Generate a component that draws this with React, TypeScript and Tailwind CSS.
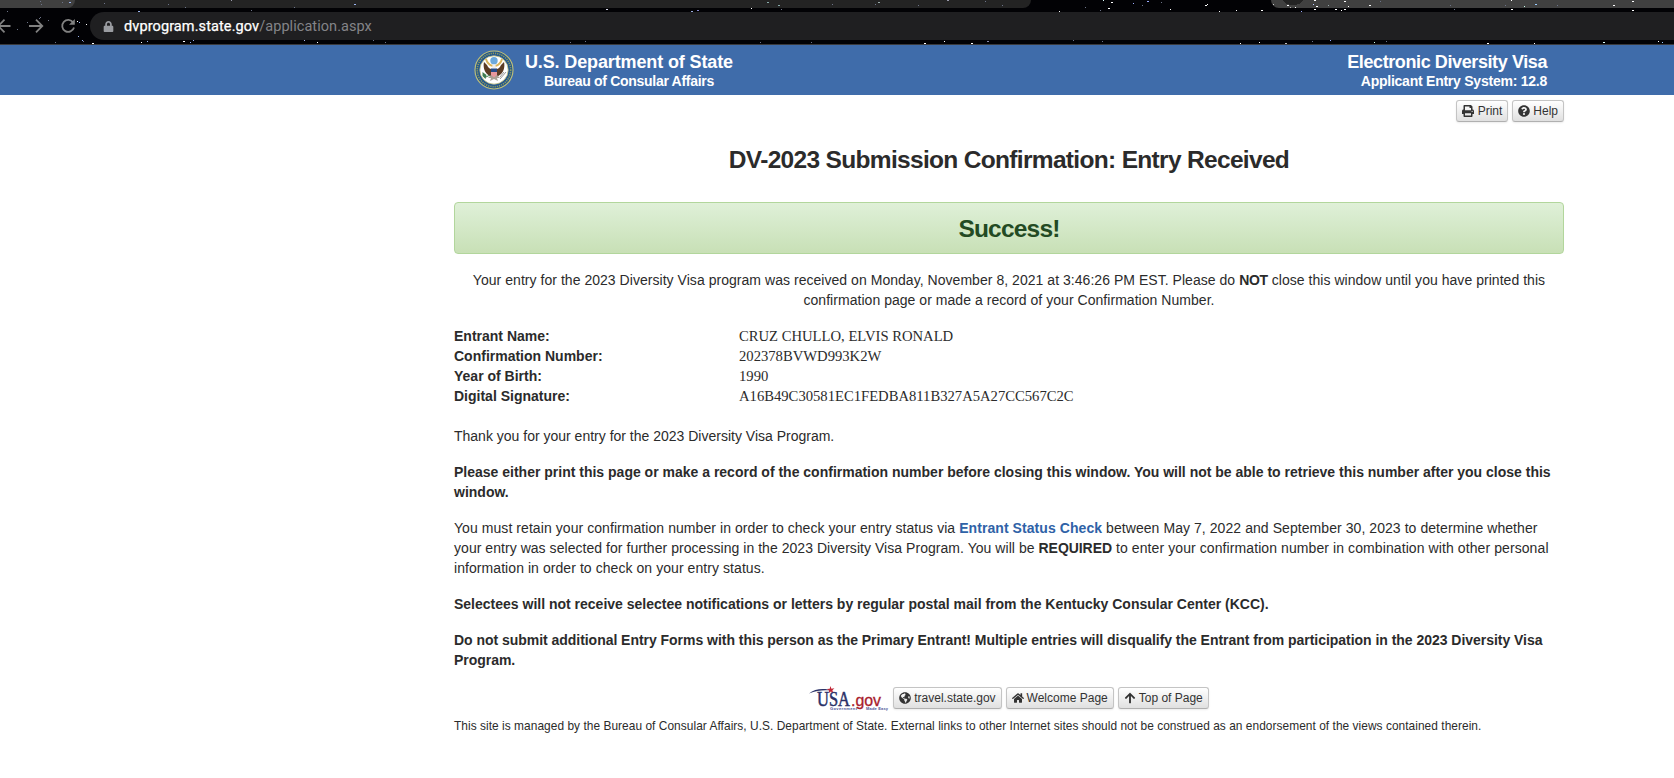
import React from 'react';
import { FaPrint, FaQuestionCircle, FaHome, FaArrowUp, FaGlobeAmericas, FaLock } from 'react-icons/fa';

type S = [number, number, string?, number?];
const stars: S[] = [
  [40, 1], [41, 4], [62, 2], [7, 11], [40, 17], [39, 18], [27, 22], [17, 29], [48, 20], [69, 2, '#9ab4f0', 2], [77, 21, '#fff'], [79, 22, '#9ab4f0'], [86, 24, '#fff'], [104, 3], [116, 12], [138, 11, '#9ab4f0', 2],
  [78, 36, '#9ab4f0'], [82, 40, '#9ab4f0'], [83, 41], [92, 43, '#fff', 2], [55, 42], [141, 42, '#fff'], [147, 41, '#9ab4f0'], [183, 41, '#fff', 2], [190, 42, '#9ab4f0'], [193, 40, '#9ab4f0'], [304, 40, '#aab8f0'], [317, 42, '#fff'],
  [373, 40], [385, 42], [294, 7], [354, 4, '#9ab4f0', 2], [231, 0, '#99a'], [168, 4], [185, 7], [251, 10],
  [606, 9, '#dde', 2], [691, 11, '#9ad', 2], [697, 10, '#88c', 2], [767, 2, '#8aa', 2], [778, 5, '#8aa', 2], [751, 8, '#fff'], [781, 9], [832, 4], [878, 2, '#9aa', 2], [875, 4], [918, 5], [947, 0, '#99a', 2], [985, 1], [1002, 5],
  [924, 43, '#fff', 2], [944, 41, '#fff'], [971, 43, '#fff', 2], [987, 41, '#88a', 2], [1073, 40], [1102, 41], [570, 42], [585, 41], [760, 42], [811, 42], [1059, 11, '#fff'],
  [1103, 0, '#dff'], [1111, 2, '#fff', 2], [1108, 8, '#fff', 2], [1100, 10], [1085, 7], [1133, 3, '#9af'], [1142, 5], [1147, 1, '#9af', 2], [1161, 2], [1170, 9, '#fff'], [1205, 5, '#fff', 2], [1207, 4, '#fff'], [1219, 11, '#fff'], [1261, 10, '#fff', 2],
  [1236, 10, '#fff'], [1273, 4, '#ccc'], [1287, 5, '#fff', 2], [1290, 7, '#aaa'], [1295, 7, '#fff'], [1301, 11, '#9af'], [1314, 0, '#fff', 2], [1313, 4, '#bcf'], [1316, 6, '#fff', 2], [1314, 9, '#fff', 2], [1328, 5, '#9aa'], [1335, 9, '#fff', 2], [1341, 10, '#fff'], [1344, 9, '#fff', 2], [1344, 1, '#fff', 2], [1348, 6, '#fff'],
  [1369, 5, '#fff', 2], [1380, 1], [1454, 9], [1450, 5], [1511, 0, '#fff'], [1511, 9, '#fff', 2], [1505, 5], [1524, 6, '#cfe'], [1535, 4, '#9cf', 2], [1557, 5], [1613, 5, '#fff', 2], [1632, 1, '#fff', 2], [1632, 10, '#fff', 2],
  [1240, 43, '#fff'], [1259, 42, '#fff'], [1285, 43, '#bbb', 2], [1312, 41], [1330, 40, '#9af'], [1374, 42, '#cfe'], [1386, 41], [1487, 43, '#fff', 2], [1534, 43, '#fff'], [1603, 42, '#dff', 2], [1658, 41, '#fff'], [1662, 42, '#9cf'],
];

function Browser() {
  return (
    <div className="relative flex h-[45px] w-full flex-col overflow-hidden border-b border-[#3a3a3c] bg-[#020205]">
      <div className="flex h-2 justify-between">
        <div className="flex h-2 w-[1031px] overflow-hidden rounded-br-lg bg-[#232323]">
          <div className="h-2 w-[75px] rounded-br-lg bg-[#404040]" />
        </div>
        <div className="h-2 w-[403px] rounded-bl-lg bg-[#404040]" />
      </div>
      <svg className="absolute left-0 top-0" width="1674" height="44" shapeRendering="crispEdges">
        <ellipse cx="1293" cy="0" rx="10" ry="5" fill="#232323" />
        {stars.map(([x, y, c = '#6d7488', w = 1], i) => (
          <rect key={i} x={x} y={y} width={w} height="1" fill={c} />
        ))}
      </svg>
      <div className="relative mt-1 flex h-7 items-center">
        <svg className="shrink-0" width="90" height="28" fill="none" stroke="#818181" strokeWidth="1.8">
          <path d="M10.500 14H-3M4.500 7.700l-6.300 6.300 6.300 6.300" />
          <path d="M29 14h13M36 7.700l6.300 6.300-6.300 6.300" />
          <path d="M73.200 10.500A6 6 0 1 0 74 15.500" />
          <path d="M74.800 7v5.800H69z" fill="#818181" stroke="none" />
        </svg>
        <div className="flex h-7 flex-1 items-center rounded-l-full bg-[#1f1f21] pl-[13px] font-['Roboto',sans-serif] text-[14.500px] text-[#848488]">
          <FaLock className="mr-[10px] text-[11px] text-[#9a9ca1]" />
          <span className="pt-[2px] tracking-[0.1px] text-white [-webkit-text-stroke:0.25px_white]">dvprogram.state.gov</span>
          <span className="pt-[2px] tracking-[0.06px]">/application.aspx</span>
        </div>
      </div>
    </div>
  );
}

function Seal() {
  return (
    <svg width="40" height="40" viewBox="0 0 40 40">
      <circle cx="20" cy="20" r="19" fill="#24578c" stroke="#c3c277" strokeWidth="1.100" />
      <circle cx="20" cy="20" r="16.700" fill="none" stroke="#8d9b60" strokeWidth="1.600" strokeDasharray="1.200 1" />
      <circle cx="20" cy="20" r="14.200" fill="#fff" stroke="#b8b877" strokeWidth=".8" />
      <path d="M10 12c-1 4 0 9 3 12l4 3 1-4v-4c-3 0-4-2-5-4zM30 12c1 4 0 9-3 12l-4 3-1-4v-4c3 0 4-2 5-4z" fill="#5b3c24" />
      <path d="M17 25l-3 3 3 0-1 3 4-2 4 2-1-3 3 0-3-3z" fill="#aaa195" />
      <path d="M12 9c1 4 3 6 7 7M28 9c-1 4-3 6-7 7" stroke="#d9b45b" strokeWidth="2" fill="none" />
      <circle cx="20" cy="10.800" r="3.700" fill="#6ca9dc" />
      <path d="M18.500 14.500h3l.5 4h-4z" fill="#eee" />
      <path d="M17 18.500h6v3.500h-6z" fill="#244a87" />
      <path d="M17 22h6v3l-3 2.500-3-2.500z" fill="#e8989d" />
      <path d="M8.500 22l4 3-1 4-3-3z" fill="#3f7d50" />
      <path d="M12 27l4-2" stroke="#3f7d50" />
      <path d="M32 22l-6 7M30 22l-4 5" stroke="#999" />
    </svg>
  );
}

function UsaLogo() {
  return (
    <svg width="80" height="26" viewBox="0 0 80 26">
      <path d="M0 8.500C6 3 16 3 24 5.500 15 4.800 8 5 0 8.500z" fill="#2a3167" />
      <path d="M21.500 1l.9 2.700 3-.4-2 2 .9 2.700-2.400-1.500-2.400 1.700.6-2.700-2.300-1.500 2.900-.2z" fill="#c02636" />
      <text x="8" y="20.500" fontFamily="Liberation Serif" fontSize="20" textLength="33" lengthAdjust="spacingAndGlyphs" fill="#2a3167" stroke="#2a3167" strokeWidth=".5">USA</text>
      <text x="42" y="20.500" fontFamily="Liberation Sans" fontSize="16" textLength="30" lengthAdjust="spacingAndGlyphs" fill="#a8202c" stroke="#a8202c" strokeWidth=".3">.gov</text>
      <text x="21" y="24.800" fontFamily="Liberation Sans" fontWeight="bold" fontSize="4" textLength="27" fill="#4a5296">Government</text>
      <text x="57" y="24.800" fontFamily="Liberation Sans" fontWeight="bold" fontSize="4" textLength="22" fill="#4a5296">Made Easy</text>
    </svg>
  );
}

function Button({ icon, children }: { icon: React.ReactNode; children: React.ReactNode }) {
  return (
    <button className="flex h-[22px] items-center gap-[3px] whitespace-nowrap rounded-[3px] border border-[#c4c4c4] border-b-[#b0b0b0] bg-linear-to-b from-white to-[#e0e0e0] px-[5px] text-[12px] text-[#333] shadow-[0_1px_2px_rgba(0,0,0,0.08)]">
      {icon}
      {children}
    </button>
  );
}

const details = [
  ['Entrant Name:', 'CRUZ CHULLO, ELVIS RONALD'],
  ['Confirmation Number:', '202378BVWD993K2W'],
  ['Year of Birth:', '1990'],
  ['Digital Signature:', 'A16B49C30581EC1FEDBA811B327A5A27CC567C2C'],
];

export default function App() {
  return (
    <div className="h-[778px] w-[1674px] overflow-hidden bg-white font-['Liberation_Sans',Arial,sans-serif] text-[14px] leading-5 text-[#2b2b2b]">
      <Browser />
      <header className="flex h-[50px] justify-between bg-[#3f6caa] pl-[474px] pr-[127px] font-bold text-white">
        <div className="flex items-center gap-[11px]">
          <Seal />
          <div className="pt-[2px] text-center">
            <div className="text-[18px] leading-[20px] tracking-[-0.13px]">U.S. Department of State</div>
            <div className="text-[14px] leading-[18px] tracking-[-0.3px]">Bureau of Consular Affairs</div>
          </div>
        </div>
        <div className="pt-[7px] text-right">
          <div className="text-[18px] leading-[20px] tracking-[-0.4px]">Electronic Diversity Visa</div>
          <div className="text-[14px] leading-[18px] tracking-[-0.24px]">Applicant Entry System: 12.8</div>
        </div>
      </header>
      <main className="ml-[454px] w-[1110px]">
        <div className="flex justify-end gap-1 pt-[5px]">
          <Button icon={<FaPrint className="mr-px" />}>Print</Button>
          <Button icon={<FaQuestionCircle />}>Help</Button>
        </div>
        <h1 className="mt-[18px] text-center text-[24.500px] font-bold leading-10 tracking-[-0.68px]">DV-2023 Submission Confirmation: Entry Received</h1>
        <div className="mt-[22px] flex h-[52px] items-center justify-center rounded border border-[#b2d69c] bg-linear-to-b from-[#dff0d8] to-[#c8e0b6] pt-[2px] text-[24.500px] font-bold tracking-[-0.8px] text-[#234a23]">
          Success!
        </div>
        <div className="mt-[16px] text-center tracking-[0.04px]">
          Your entry for the 2023 Diversity Visa program was received on Monday, November 8, 2021 at 3:46:26 PM EST. Please do <b className="tracking-[-0.3px]">NOT</b> close this window until you have printed this
          <br />
          confirmation page or made a record of your Confirmation Number.
        </div>
        <dl className="mt-4">
          {details.map(([k, v]) => (
            <div key={k} className="flex h-5">
              <dt className="w-[285px] font-bold">{k}</dt>
              <dd className="font-['Liberation_Serif',serif] text-[14.650px]">{v}</dd>
            </div>
          ))}
        </dl>
        <p className="mt-5">Thank you for your entry for the 2023 Diversity Visa Program.</p>
        <p className="mt-4 font-bold">
          Please either print this page or make a record of the confirmation number before closing this window. You will not be able to retrieve this number after you close this
          <br />
          window.
        </p>
        <p className="mt-4 tracking-[0.066px]">
          You must retain your confirmation number in order to check your entry status via <b className="text-[#2f62a7]">Entrant Status Check</b> between May 7, 2022 and September 30, 2023 to determine whether
          <br />
          <span className="tracking-[0.045px]">your entry was selected for further processing in the 2023 Diversity Visa Program. You will be </span>
          <b className="tracking-[-0.05px]">REQUIRED</b>
          <span className="tracking-[0.09px]"> to enter your confirmation number in combination with other personal</span>
          <br />
          information in order to check on your entry status.
        </p>
        <p className="mt-4 font-bold">Selectees will not receive selectee notifications or letters by regular postal mail from the Kentucky Consular Center (KCC).</p>
        <p className="mt-4 font-bold tracking-[-0.035px]">
          Do not submit additional Entry Forms with this person as the Primary Entrant! Multiple entries will disqualify the Entrant from participation in the 2023 Diversity Visa
          <br />
          Program.
        </p>
        <div className="mt-[15px] flex items-center justify-center gap-1">
          <UsaLogo />
          <Button icon={<FaGlobeAmericas />}>travel.state.gov</Button>
          <Button icon={<FaHome />}>Welcome Page</Button>
          <Button icon={<FaArrowUp />}>Top of Page</Button>
        </div>
        <p className="mt-[5px] text-[11.900px] tracking-[0.05px]">
          This site is managed by the Bureau of Consular Affairs, U.S. Department of State. External links to other Internet sites should not be construed as an endorsement of the views contained therein.
        </p>
      </main>
    </div>
  );
}
